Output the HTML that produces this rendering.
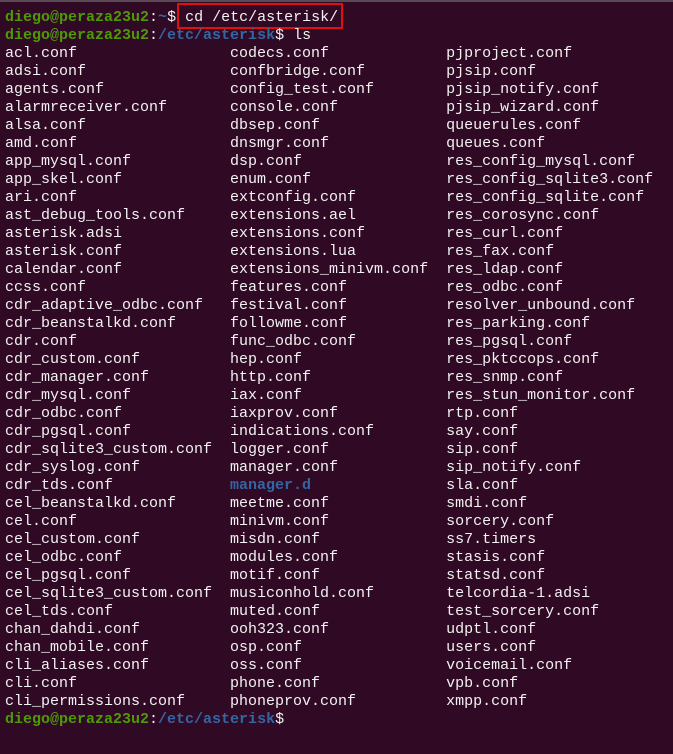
<!DOCTYPE html>
<html><head><meta charset="utf-8"><style>
html,body{margin:0;padding:0;background:#300a24;width:673px;height:754px;overflow:hidden}
.top{position:absolute;left:0;top:0;width:673px;height:2px;background:#5a4a55}
pre{position:absolute;left:5px;top:9px;margin:0;font-family:"Liberation Mono",monospace;font-size:15px;line-height:18px;color:#f2f2f2;white-space:pre}
.g{color:#4e9a06;font-weight:bold}
.b{color:#3465a4;font-weight:bold}
.box{position:absolute;left:177px;top:3px;width:162px;height:22px;border:2px solid #e01010}
</style></head><body>
<div class="top"></div>
<div class="box"></div>
<pre><span class="g">diego@peraza23u2</span>:<span class="b">~</span>$ cd /etc/asterisk/
<span class="g">diego@peraza23u2</span>:<span class="b">/etc/asterisk</span>$ ls
acl.conf                 codecs.conf             pjproject.conf
adsi.conf                confbridge.conf         pjsip.conf
agents.conf              config_test.conf        pjsip_notify.conf
alarmreceiver.conf       console.conf            pjsip_wizard.conf
alsa.conf                dbsep.conf              queuerules.conf
amd.conf                 dnsmgr.conf             queues.conf
app_mysql.conf           dsp.conf                res_config_mysql.conf
app_skel.conf            enum.conf               res_config_sqlite3.conf
ari.conf                 extconfig.conf          res_config_sqlite.conf
ast_debug_tools.conf     extensions.ael          res_corosync.conf
asterisk.adsi            extensions.conf         res_curl.conf
asterisk.conf            extensions.lua          res_fax.conf
calendar.conf            extensions_minivm.conf  res_ldap.conf
ccss.conf                features.conf           res_odbc.conf
cdr_adaptive_odbc.conf   festival.conf           resolver_unbound.conf
cdr_beanstalkd.conf      followme.conf           res_parking.conf
cdr.conf                 func_odbc.conf          res_pgsql.conf
cdr_custom.conf          hep.conf                res_pktccops.conf
cdr_manager.conf         http.conf               res_snmp.conf
cdr_mysql.conf           iax.conf                res_stun_monitor.conf
cdr_odbc.conf            iaxprov.conf            rtp.conf
cdr_pgsql.conf           indications.conf        say.conf
cdr_sqlite3_custom.conf  logger.conf             sip.conf
cdr_syslog.conf          manager.conf            sip_notify.conf
cdr_tds.conf             <span class="b">manager.d</span>               sla.conf
cel_beanstalkd.conf      meetme.conf             smdi.conf
cel.conf                 minivm.conf             sorcery.conf
cel_custom.conf          misdn.conf              ss7.timers
cel_odbc.conf            modules.conf            stasis.conf
cel_pgsql.conf           motif.conf              statsd.conf
cel_sqlite3_custom.conf  musiconhold.conf        telcordia-1.adsi
cel_tds.conf             muted.conf              test_sorcery.conf
chan_dahdi.conf          ooh323.conf             udptl.conf
chan_mobile.conf         osp.conf                users.conf
cli_aliases.conf         oss.conf                voicemail.conf
cli.conf                 phone.conf              vpb.conf
cli_permissions.conf     phoneprov.conf          xmpp.conf
<span class="g">diego@peraza23u2</span>:<span class="b">/etc/asterisk</span>$ </pre>
</body></html>
